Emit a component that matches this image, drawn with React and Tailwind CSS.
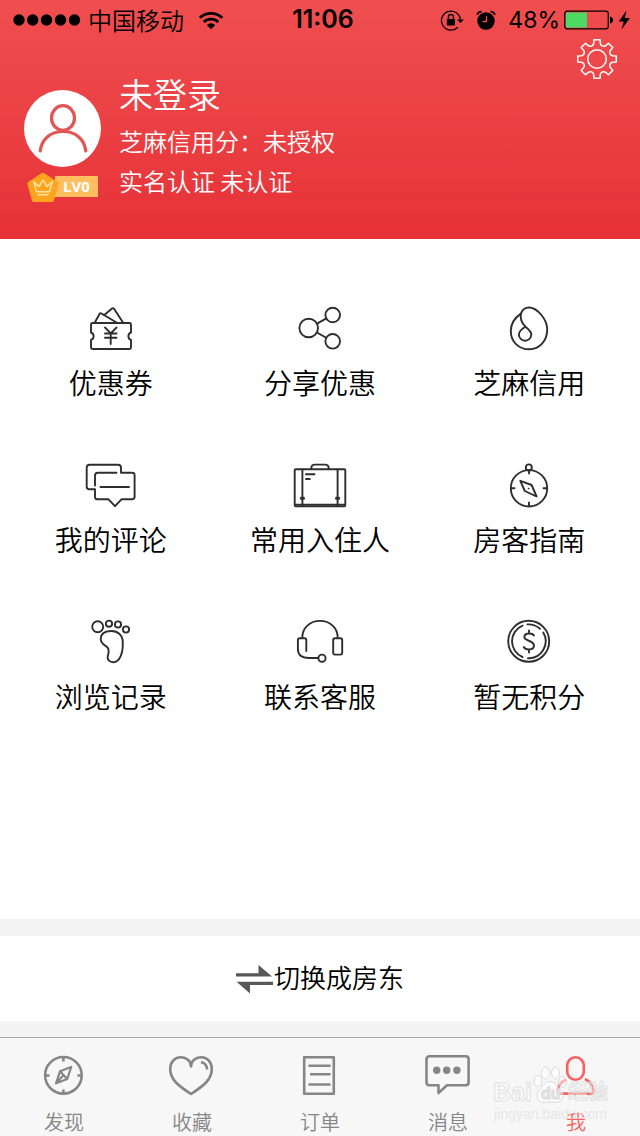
import React from "react";

const polar = (r, deg) => {
  const a = ((deg - 90) * Math.PI) / 180;
  return `${(21 + r * Math.cos(a)).toFixed(2)} ${(21 + r * Math.sin(a)).toFixed(2)}`;
};

const gearPath =
  [0, 45, 90, 135, 180, 225, 270, 315]
    .map(
      (d) =>
        `${d === 0 ? "M" : "L"}${polar(19.5, d - 9)} L${polar(19.5, d + 9)} L${polar(15.8, d + 12)} Q${polar(12.4, d + 22.5)} ${polar(15.8, d + 33)}`
    )
    .join(" ") + "Z";

function MenuSvg({ children }) {
  return (
    <svg
      viewBox="0 0 56 44"
      className="h-11 w-14 overflow-visible"
      fill="none"
      stroke="#2e2e2e"
      strokeWidth="1.9"
      strokeLinecap="round"
      strokeLinejoin="round"
      aria-hidden="true"
    >
      {children}
    </svg>
  );
}

const menu = [
  {
    label: "优惠券",
    icon: (
      <>
        <path d="M9.5 17H46.5Q48 17 48 18.5V26.5A4 4 0 0 0 48 34V41.5Q48 43 46.5 43H9.5Q8 43 8 41.5V34A4 4 0 0 0 8 26.5V18.5Q8 17 9.5 17Z" />
        <path d="M11.8 16.5 16.5 8Q17.2 6.8 18.5 7.5L33.5 16.5M21 9.3 29 2.6Q30.3 1.6 31.2 3L40 16.5" />
        <path d="M22 21.5 27.7 27.3 33.5 21.5M22 27.5H33.5M22 31.8H33.5M27.7 27.5V38" />
      </>
    ),
  },
  {
    label: "分享优惠",
    icon: (
      <>
        <circle cx="16.7" cy="22" r="9.3" />
        <circle cx="40.7" cy="9" r="7.3" />
        <circle cx="40.7" cy="35.3" r="7.3" />
        <path d="M25 17.7 34 12.7M25 26.5 34.2 31.8" />
      </>
    ),
  },
  {
    label: "芝麻信用",
    icon: (
      <>
        <path d="M19.9 7.6C21.5 3.2 25 1.3 28.6 1.5C36 2 46.2 13 46.2 23.5C46.2 35 38.5 43.3 28.3 43.3C17.5 43.3 9.8 35.500 9.8 25C9.8 17.5 13.5 12 19.9 7.6Z" />
        <path d="M19.9 7.6C19 13 20.5 17 24.5 20.7C28.5 24 30.3 25.8 30.3 28.5A6.2 6.2 0 0 1 17.9 28.5C17.9 25.5 20.5 23 24.5 20.7" />
      </>
    ),
  },
  {
    label: "我的评论",
    icon: (
      <>
        <path d="M38 9.5V4.5Q38 1.7 35.2 1.7H6.5Q3.7 1.7 3.7 4.5V23.5Q3.7 26.3 6.5 26.3H12V34Q12 36.3 14.5 36.3H25.5L32 43.2 38.5 36.3H49Q51.6 36.3 51.6 33.8V12.2Q51.6 9.8 49 9.8H38" />
        <path d="M12 22.5V12.5Q12 9.8 14.8 9.8H33.5M17.5 24H46" />
      </>
    ),
  },
  {
    label: "常用入住人",
    icon: (
      <>
        <rect x="2.7" y="6.3" width="50.6" height="37" rx="1" />
        <path d="M19.3 6V4.5Q19.8 1.6 22.5 1.6H33.5Q36.2 1.6 36.7 4.5V6" />
        <path d="M10.4 6.5V43M45.6 6.5V43M14 11.3H22.5M14 16H17.8M3.5 41.600H52.5" />
        <path d="M9.3 35.3H11.5M44.5 35.3H46.7" strokeWidth="3" />
      </>
    ),
  },
  {
    label: "房客指南",
    icon: (
      <>
        <circle cx="28" cy="25.3" r="18.2" />
        <circle cx="27.8" cy="4.4" r="3" />
        <path d="M28 7.5V10.5M28 39.5V43M10 25.3H13.5M42.5 25.3H46M19.3 17.8 30.6 22 35.6 33.5 23.8 28Z" />
        <circle cx="27.5" cy="25.5" r=".4" strokeWidth="1" />
      </>
    ),
  },
  {
    label: "浏览记录",
    icon: (
      <>
        <circle cx="14.7" cy="6.8" r="5.5" />
        <circle cx="26" cy="3.7" r="3.1" />
        <circle cx="35" cy="4.5" r="3.1" />
        <circle cx="43" cy="9.5" r="3.1" />
        <path d="M27.7 11C34.5 10.5 39.8 15 39.8 22.5C40 34 36.5 42.3 30.3 42.3C26.5 42.3 23.8 39.5 24.8 36C25.8 32.5 26.8 29.5 24.3 27.2C22 25 17.7 24 17.7 18.8C17.7 14 21.5 11.3 27.7 11Z" />
      </>
    ),
  },
  {
    label: "联系客服",
    icon: (
      <>
        <path d="M10.3 17.5C10.3 8 18 .9 28 .9S45.7 8 45.7 17.5" />
        <path d="M14.3 31V20Q14.3 18.3 12.5 18.3H7.7Q5.9 18.3 5.9 20V29C5.9 35.5 9.5 38 17 38H26.3" />
        <circle cx="30" cy="38.2" r="3.6" />
        <rect x="41.2" y="18.3" width="9" height="16.3" rx="1.8" />
      </>
    ),
  },
  {
    label: "暂无积分",
    icon: (
      <>
        <circle cx="27.7" cy="21.3" r="20.5" />
        <path d="M21.5 5.6A17 17 0 0 0 21.5 37M26.5 4.4A17 17 0 0 1 39 8.8M42.3 12.6A17 17 0 0 1 27 38.2" />
        <path d="M33 15.5C31.5 13 24 12.2 23.3 16.8C23 21.5 33.5 20 33 25.8C32.5 30.5 24.5 30.3 22.8 27M28 10.5V13.5M28 29.5V32.5" />
      </>
    ),
  },
];

const tabs = [
  {
    label: "发现",
    icon: (
      <>
        <circle cx="23.4" cy="21.3" r="18.3" />
        <path d="M23.4 3V7.5M23.4 35.5V39.5M5 21.5H9.5M37.5 21.5H41.5" />
        <path d="M31.2 13 27.2 25 16 29.3 20 17.3ZM20 17.3 27.2 25M23.5 21.3 16.5 28.5" strokeWidth="2.2" />
      </>
    ),
  },
  {
    label: "收藏",
    icon: (
      <>
        <path d="M23 12.5C23 6 17.5 3.3 12.5 3.3C6.5 3.3 2.2 8.5 2.2 15C2.2 25.5 10 31.5 23 40C36 31.5 43.8 25.5 43.8 15C43.8 8.5 39.5 3.3 33.5 3.3C28.5 3.3 23 6 23 12.5Z" />
        <path d="M33 8.3Q38.5 9 39.2 15.5" />
      </>
    ),
  },
  {
    label: "订单",
    icon: (
      <>
        <path d="M8.2 3.2H37.8V39.8H8.2Z" />
        <path d="M12.5 11.7H34.5M14 20.2H34.5M12.5 30.5H34.5" />
      </>
    ),
  },
  {
    label: "消息",
    icon: (
      <>
        <path d="M5.5 2.3H41.5Q44.6 2.3 44.6 5.3V28.2Q44.6 31.3 41.5 31.3H23L14.5 39V31.3H5.5Q2.5 31.3 2.5 28.2V5.3Q2.5 2.3 5.5 2.3Z" />
        <g fill="currentColor" stroke="none">
          <circle cx="12.7" cy="16.3" r="3.7" />
          <circle cx="22.7" cy="16.3" r="3.7" />
          <circle cx="32.9" cy="16.3" r="3.7" />
        </g>
      </>
    ),
  },
  {
    label: "我",
    active: true,
    icon: (
      <>
        <rect x="15.2" y="3.3" width="16.6" height="22.5" rx="8.3" />
        <path d="M14 25.5C9 28 6 33 5.5 37Q5.3 39.6 8 39.6H39Q41.7 39.6 41.5 37C41 33 38.5 27.5 33 25" />
      </>
    ),
  },
];

function StatusBar() {
  return (
    <div className="grid h-10 grid-cols-[1fr_auto_1fr] items-center pr-2 pl-3 text-2xl text-black">
      <div className="flex items-center">
        <svg viewBox="0 0 70 12" className="h-3 w-[70px]" aria-label="信号">
          <g fill="#000">
            <circle cx="7" cy="6" r="5.7" />
            <circle cx="20.7" cy="6" r="5.7" />
            <circle cx="34.5" cy="6" r="5.7" />
            <circle cx="48.5" cy="6" r="5.7" />
            <circle cx="62.5" cy="6" r="5.7" />
          </g>
        </svg>
        <span className="ml-1.5 font-[350]">中国移动</span>
        <svg viewBox="0 0 26 20" className="ml-3.5 h-5 w-[26px]" fill="none" stroke="#000" strokeWidth="2.8" aria-label="无线网络">
          <path d="M1.8 7.8A16.5 16.5 0 0 1 24.2 7.8M5.8 12A10.7 10.7 0 0 1 20.2 12" />
          <path d="M13 19.2 8.8 14.9A6 6 0 0 1 17.2 14.9Z" fill="#000" stroke="none" />
        </svg>
      </div>
      <span className="pl-0.5 font-[Inter,sans-serif] text-[25px] font-semibold">11:06</span>
      <div className="flex items-center justify-end">
        <svg viewBox="0 0 24 22" className="h-[22px] w-6" fill="none" stroke="#000" strokeWidth="1.3" aria-label="方向锁定">
          <path d="M17.8 18.2A9.5 9.5 0 1 1 20.4 10.5" />
          <path d="M17 10.500H23.8L20.4 14Z" fill="#000" stroke="none" />
          <rect x="6.8" y="10" width="8.2" height="6.6" rx=".6" fill="#000" stroke="none" />
          <path d="M8.4 10.5V8A2.5 2.5 0 0 1 13.4 8V10.5" strokeWidth="1.4" />
        </svg>
        <svg viewBox="0 0 20 20" className="ml-3 h-5 w-5" aria-label="闹钟">
          <circle cx="10" cy="11" r="8.7" fill="#000" />
          <path d="M1 4.8Q2 1.8 5.5 1.6M19 4.8Q18 1.8 14.5 1.6" stroke="#000" strokeWidth="1.6" fill="none" />
          <path d="M10.500 6V11.5H6.5" stroke="#ef4c4d" strokeWidth="1.3" fill="none" />
        </svg>
        <span className="ml-3 font-[Inter,sans-serif] text-[23px]">48%</span>
        <svg viewBox="0 0 68 20" className="ml-1 h-5 w-[68px]" aria-label="电量">
          <rect x=".7" y="1.2" width="43.6" height="17.6" rx="2.5" fill="none" stroke="#000" strokeWidth="1.3" />
          <rect x="2" y="2.5" width="21" height="15" rx="1" fill="#4cd964" />
          <path d="M46 6.5Q49 7.5 49 10T46 13.5Z" />
          <path d="M62.5 .5 54.8 11.5H59.8L57.5 19.5 66 8H60.8Z" />
        </svg>
      </div>
    </div>
  );
}

function Profile() {
  return (
    <div className="flex pt-8 pl-6 text-white">
      <div className="flex flex-col items-center pt-[18px]">
        <div className="flex size-[77px] items-center justify-center rounded-full bg-white">
          <svg viewBox="0 0 52 50" className="h-[50px] w-[52px]" fill="none" stroke="#e15554" strokeWidth="3.2" strokeLinecap="round" aria-label="头像">
            <ellipse cx="26" cy="14" rx="11.5" ry="12.3" />
            <path d="M3.2 47C4.5 35.5 13 27.5 26 27.5S47.5 35.5 48.8 47" />
          </svg>
        </div>
        <div className="mt-1 flex h-[31px] items-center">
          <svg viewBox="0 0 32 30" className="z-10 h-[30px] w-8" aria-label="等级徽章">
            <path d="M14.5 1.2Q16 .2 17.5 1.2L30.8 10Q32 11 31.5 12.5L27 28.5Q26.5 30 25 30H7Q5.5 30 5 28.5L.5 12.5Q0 11 1.2 10Z" fill="#ffa41c" />
            <path d="M7 9.8 9.5 19.8H22.5L25.2 9.8 20 14.5 16 8.2 12 14.5ZM10.5 22.7H21.5" fill="none" stroke="#ffe3a6" strokeWidth="1.5" strokeLinejoin="round" />
          </svg>
          <span className="-ml-1 w-[43px] bg-[#ffbf60] pl-2 font-[Open_Sans,sans-serif] text-[15px] leading-[21px] font-bold">LV0</span>
        </div>
      </div>
      <div className="flex flex-col pl-[18px] font-[350]">
        <h1 className="text-[34px] leading-11">未登录</h1>
        <p className="mt-[5px] text-2xl leading-10">芝麻信用分：未授权</p>
        <p className="text-2xl leading-10">实名认证 未认证</p>
      </div>
    </div>
  );
}

function Watermark() {
  return (
    <div
      aria-hidden="true"
      className="pointer-events-none absolute right-8 bottom-3 flex flex-col items-center font-[Liberation_Sans,Noto_Sans_CJK_SC,sans-serif] text-white/40"
    >
      <div className="flex items-end text-[25px] leading-6 font-bold [-webkit-text-stroke:1px_#dadadacc]">
        <span>Bai</span>
        <svg viewBox="0 0 36 38" className="h-[38px] w-9" fill="#ffffff80" stroke="#dadada" strokeWidth="1">
          <ellipse cx="6" cy="15" rx="4" ry="5.5" />
          <ellipse cx="13.5" cy="7" rx="4" ry="6" />
          <ellipse cx="23.5" cy="7" rx="4" ry="6" />
          <ellipse cx="30.5" cy="16" rx="4" ry="5.5" />
          <path d="M18 15.5C23 15.5 25 20 28.5 23.5C33 28 31 37 24 36.5Q18 35.5 12 36.5C5 37 3 28 7.5 23.5C11 20 13 15.5 18 15.5Z" />
          <text x="9" y="33" fontSize="16" fontFamily="Liberation Sans, sans-serif" fontWeight="700" fill="#e6e6e6">du</text>
        </svg>
        <span className="text-xl leading-6">经验</span>
      </div>
      <span className="text-sm leading-5 text-[#e2e2e2]/80">jingyan.baidu.com</span>
    </div>
  );
}

export default function App() {
  return (
    <div className="flex min-h-screen flex-col bg-[#f4f4f4] font-[Noto_Sans_CJK_SC,sans-serif] text-black">
      <header className="relative bg-linear-to-b from-[#f04e4f] to-[#e63137] pb-[37px]">
        <StatusBar />
        <button type="button" aria-label="设置" className="absolute top-[38px] right-[22px]">
          <svg viewBox="0 0 42 42" className="size-[42px]" fill="none" stroke="#fff" strokeWidth="1.5" strokeLinejoin="round">
            <path d={gearPath} />
            <circle cx="21" cy="21" r="9.3" />
          </svg>
        </button>
        <Profile />
      </header>

      <main className="flex flex-1 flex-col">
        <div className="grid flex-1 grid-cols-3 content-start gap-y-[61px] bg-white px-1.5 pt-[67px]">
          {menu.map((m) => (
            <button key={m.label} type="button" className="flex flex-col items-center">
              <MenuSvg>{m.icon}</MenuSvg>
              <span className="mt-3 text-[28px] leading-10 font-[350]">{m.label}</span>
            </button>
          ))}
        </div>
        <button type="button" className="mt-[17px] mb-4 flex h-[85px] items-center justify-center bg-white text-[26px] font-[350]">
          <svg viewBox="0 0 38 30" className="h-[30px] w-[38px]" fill="#585858" aria-hidden="true">
            <path d="M0 9.2H22.5V1L36 12.400H0Z" />
            <path d="M37 17.7V20.9H14V29.5L.5 17.7Z" />
          </svg>
          <span className="pb-1">切换成房东</span>
        </button>
      </main>

      <nav className="relative grid grid-cols-5 border-t border-[#a8a8a8] bg-[#f7f7f7] pt-4 pb-0.5">
        {tabs.map((t) => (
          <button
            key={t.label}
            type="button"
            className={t.active ? "flex flex-col items-center text-[#fb5f60]" : "flex flex-col items-center text-[#868686]"}
          >
            <svg viewBox="0 0 48 44" className="h-11 w-12" fill="none" stroke="currentColor" strokeWidth="2.6" strokeLinejoin="round" aria-hidden="true">
              {t.icon}
            </svg>
            <span className="mt-3 text-xl leading-6 font-[350]">{t.label}</span>
          </button>
        ))}
        <Watermark />
      </nav>
    </div>
  );
}
